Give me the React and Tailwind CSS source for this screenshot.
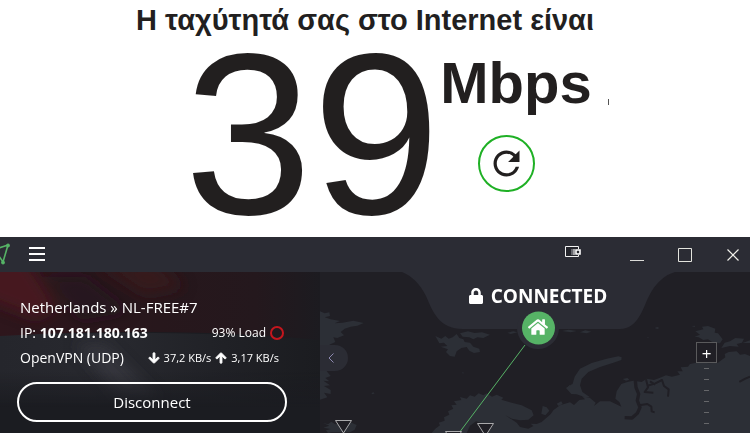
import {FaArrowDown, FaArrowUp, FaHome, FaLock} from 'react-icons/fa';
import {MdRefresh} from 'react-icons/md';

const zoomSteps = [1, 2, 3, 4, 5, 6];

function SpeedResult() {
  return (
    <section className="h-[237px] bg-white font-['Liberation_Sans',Arial,sans-serif] text-[#221f1f]">
      <h1 className="pr-5 text-center text-[29px] leading-10 font-bold whitespace-nowrap">
        Η ταχύτητά σας στο Internet είναι
      </h1>
      <div className="flex justify-center pt-[5px] pl-[43px]">
        <span className="text-[230px] leading-[180px]">39</span>
        <div className="pt-2">
          <div className="flex items-end">
            <span className="text-[58px] leading-[60px] font-bold">Mbps</span>
            <span className="mb-2 ml-4 h-1.5 w-px bg-[#555]" />
          </div>
          <button
            aria-label="Refresh"
            className="mt-[22px] ml-[38px] flex h-[57px] w-[57px] items-center justify-center rounded-full border-2 border-[#1fb025]"
          >
            <MdRefresh className="h-[39px] w-[39px]" />
          </button>
        </div>
      </div>
    </section>
  );
}

function TitleBar() {
  return (
    <header className="flex h-[35px] items-center bg-[#2b2c34] pr-[11px] text-white">
      <svg
        width="11"
        height="35"
        viewBox="0 0 11 35"
        fill="#56b366"
        stroke="#56b366"
      >
        <path d="M-4 12 8 8 3 25-4 15" fill="none" strokeWidth="1.6" />
        <circle cx="8" cy="8.500" r="1.500" />
        <circle cx="3" cy="25.500" r="1.500" />
      </svg>
      <button aria-label="Menu" className="ml-[18px]">
        <svg width="16" height="15" viewBox="0 0 16 15" fill="currentColor">
          <path d="M0 0h16v2H0zM0 6h16v2H0zM0 12h16v2H0z" />
        </svg>
      </button>
      <button aria-label="Compact view" className="mr-[49px] mb-1.5 ml-auto">
        <svg width="16" height="12" viewBox="0 0 16 12" fill="none">
          <path
            d="M13.500 3V.500H.500v10h13V9"
            stroke="#f2f2f2"
            fill="#24252b"
          />
          <path d="M6 3h2v6H6z" fill="#66676d" />
          <path d="M8 3h2v6H8z" fill="#a5a5a8" />
          <path d="M11 4h4v4h-4z" stroke="#fff" strokeWidth="1.600" />
        </svg>
      </button>
      <button aria-label="Minimize" className="mr-[34px]">
        <svg width="14" height="14" viewBox="0 0 14 14">
          <path d="M0 12.500h14" stroke="#dcdcd8" />
        </svg>
      </button>
      <button aria-label="Maximize" className="mr-[35px]">
        <svg width="14" height="14" viewBox="0 0 14 14">
          <path d="M.5.5h13v13H.5z" fill="none" stroke="#e4e4de" />
        </svg>
      </button>
      <button aria-label="Close">
        <svg width="12" height="12" viewBox="0 0 12 12">
          <path d="m.5.5 11 11m0-11-11 11" stroke="#f0f0ea" strokeWidth="1.2" />
        </svg>
      </button>
    </header>
  );
}

function FlagBackdrop() {
  return (
    <svg
      className="absolute inset-0 h-full w-full"
      viewBox="0 0 320 161"
      preserveAspectRatio="none"
    >
      <defs>
        <linearGradient id="red" x1="0" y1="0" x2="1" y2="0">
          <stop offset="0" stopColor="#2e161c" />
          <stop offset="0.5" stopColor="#27171c" />
          <stop offset="0.8" stopColor="#24181d" />
          <stop offset="1" stopColor="#1c1b20" />
        </linearGradient>
        <linearGradient id="pale" x1="0" y1="0" x2="1" y2="0">
          <stop offset="0" stopColor="#25262c" />
          <stop offset="0.35" stopColor="#28292f" />
          <stop offset="0.7" stopColor="#202126" />
          <stop offset="1" stopColor="#1b1c20" />
        </linearGradient>
        <linearGradient id="fade" x1="0" y1="0" x2="0" y2="1">
          <stop offset="0" stopColor="#1b1c21" stopOpacity="0" />
          <stop offset="1" stopColor="#1b1c21" />
        </linearGradient>
        <filter id="soft" x="-20%" y="-50%" width="140%" height="200%">
          <feGaussianBlur stdDeviation="7" />
        </filter>
      </defs>
      <path d="M0 0h320v161H0z" fill="#1b1c21" />
      <path d="M0 60C70 64 160 56 320 68v65H0z" fill="url(#pale)" />
      <path d="M0 0h320v68C220 58 110 58 0 64z" fill="url(#red)" />
      <g filter="url(#soft)">
        <path d="M-15-15h40l32 50-20 12-52-20z" fill="#4d1822" opacity="0.8" />
        <path d="M95-10h60l30 25-40 8z" fill="#3d1820" opacity="0.7" />
        <path d="M45 5h40l45 35-50 8z" fill="#1e191d" opacity="0.5" />
        <path d="M75 72h30l55 55h-40z" fill="#3a3b43" opacity="0.6" />
      </g>
      <path d="M0 100h320v35H0z" fill="url(#fade)" />
      <path d="M0 135h320v26H0z" fill="#1b1c21" />
    </svg>
  );
}

function ConnectionPanel() {
  return (
    <section className="relative w-[320px] shrink-0 overflow-hidden">
      <FlagBackdrop />
      <div className="relative pt-[23px] pr-[33px] pl-[17px]">
        <h2 className="pl-[3px] text-[15px] leading-[25px]">
          Netherlands » NL-FREE#7
        </h2>
        <div className="flex items-center pl-[3px] text-[14px] leading-[25px]">
          <span>
            IP: <b>107.181.180.163</b>
          </span>
          <span className="ml-auto text-xs">93% Load</span>
          <span className="mr-[3px] ml-1 h-3.5 w-3.5 rounded-full border-2 border-[#c5161d]" />
        </div>
        <div className="flex items-center pl-[3px] text-[14px] leading-[25px]">
          <span>OpenVPN (UDP)</span>
          <span className="mr-2 ml-auto flex items-center gap-1 text-[11px]">
            <FaArrowDown className="h-3 w-3" strokeWidth="40" />
            37,2 KB/s
            <FaArrowUp className="h-3 w-3" strokeWidth="40" />
            3,17 KB/s
          </span>
        </div>
        <button className="mt-3 h-10 w-full rounded-full border-2 border-white text-[15px]">
          Disconnect
        </button>
      </div>
    </section>
  );
}

function WorldMap() {
  return (
    <svg
      className="absolute inset-0 h-full w-full"
      viewBox="0 0 430 161"
      preserveAspectRatio="xMidYMid slice"
    >
      <path d="M0 0h430v161H0z" fill="#201f25" />
      <g fill="#2c2f36" transform="translate(0 -40) scale(.33333)">
        {/* Greenland and Iceland */}
        <path d="M0 238 14 244 28 241 30 252 14 256 32 262 60 267 44 274 68 272 100 266 131 273 112 281 92 284 74 290 62 300 72 310 52 318 40 316 46 330 28 338 52 350 30 350 40 366 42 398 26 402 28 416 20 418 32 432 16 438 28 448 10 446 30 460 12 462 32 474 32 486 12 482 22 496 0 503z" />
        <path d="m8 572 16 5 10-8 12 8 40-9 12 6 12 5-6 14-14 8H34l-10 2-6-8 14-4-22-4 18-6z" />
        {/* Svalbard */}
        <path d="M346 312 364 320 376 312 386 320 398 316 410 306 418 318 430 322 434 330 450 332 460 344 478 350 480 360 462 363 448 356 440 345 424 348 410 358 404 374 390 372 378 360 384 352 362 344 382 342 372 332 358 334z" />
        <path d="m420 304 24-6 20 5 22-2 24 7-20 10-18-2-12 6-12-6-20-2z" />
        <path d="m562 302 18-4 12 3-20 5zM154 484l6-3 4 3-6 3zM426 421l6 1-3 3z" />
        {/* Scandinavia */}
        <path d="M335 603 346 590 360 580 356 572 374 566 372 556 388 548 384 538 400 530 394 520 410 518 402 508 424 504 420 495 440 500 450 490 464 494 476 484 490 490 500 484 516 494 530 488 550 497 544 503 575 512 605 520 635 535 641 550 625 563 600 565 576 560 556 550 590 572 600 585 625 590 640 582 632 575 650 576 665 570 690 548 730 530 780 514V603z" />
        <path d="m440 603 10-22 18-13 18 6 8 29z" fill="#201f25" />
        <path d="M664 545 668 522 680 526 688 536 676 550zM710 515 724 508 728 516 716 522zM740 468l10-10v14z" />
      </g>
      <g fill="#2c2f36" transform="translate(230 -40) scale(.33333)">
        {/* northern Russia */}
        <path d="M0 550 10 535 30 520 60 511 72 519 88 504 105 502 96 492 120 498 137 512 132 522 150 508 180 508 214 524 208 510 196 500 200 478 214 456 232 450 250 446 275 450 290 440 312 444 334 436 348 430 366 434 390 428 382 418 398 418 392 406 414 404 420 396 450 390 476 394 504 392 526 376 524 366 536 360 560 358 570 368 585 366 600 372V603H0z" />
        {/* Novaya Zemlya */}
        <path d="M205 373 215 376 214 384 190 392 150 405 115 420 95 440 90 460 97 480 120 496 105 496 80 487 64 486 48 468 68 455 74 434 90 410 125 393 170 380z" />
        <path d="M436 298 460 292 456 284 474 282 496 290 494 302 504 304 518 322 510 334 490 332 474 322 460 324 446 316 434 314 450 308z" />
        <path d="M514 348 524 332 540 328 556 318 582 320 576 332 560 336 566 344 540 342z" />
        <path d="M578 333l22-8v8zM424 282l12-1-2 4zM314 288l8-3 6 3-6 3zM290 316l8 1-4 2zM36 297l20-4 24 4-18 4zM90 301l16-6 18 4-14 5zM218 441l14-3 6 5-10 3z" />
        <g fill="none" stroke="#201f25" strokeLinejoin="round">
          <path
            d="m256 446 2 20 8 20-4 20 8 20-8 18-16 14-22-1"
            strokeWidth="10"
          />
          <path
            d="m268 520 24-4 12 8 1 14 9 3M288 442l6 24-10 14 26 2M290 462l26-8 20-10 6 18 14 10-2 22M300 448l16 10M600 434l-14 6-18 10"
            strokeWidth="6"
          />
        </g>
      </g>
      <path
        d="M82 0C92 4 100 12 106 24C113 40 119 57 143 57H300C318 57 323 36 329 24C335 12 344 3 355 0Z"
        fill="#2b2c34"
      />
      <path d="m205 73-66 88" stroke="#56b366" />
      <circle cx="218" cy="56" r="21" fill="#2b2c34" />
      <circle cx="218.500" cy="56" r="16.500" fill="#56b366" />
      <g fill="#201f25" stroke="#a9a9ab">
        <path d="M15.500 148.500h16l-8 12.500zM157.500 151.500h16l-8 12.500zM125.500 159.500h16l-8 12.500z" />
      </g>
    </svg>
  );
}

function MapPanel() {
  return (
    <section className="relative min-w-0 flex-1 overflow-hidden">
      <WorldMap />
      <div className="relative flex flex-col items-center pt-3 pl-[6px]">
        <div className="flex items-center gap-2 text-[19px] leading-6 font-bold">
          <FaLock className="h-4 w-3.5" />
          CONNECTED
        </div>
        <FaHome className="mt-[9px] h-5 w-5" />
      </div>
      <button
        aria-label="Collapse map"
        className="absolute top-[73px] left-0 flex h-[26px] w-7 items-center rounded-r-full bg-[#2b2c34] pl-2"
      >
        <svg width="6" height="10" viewBox="0 0 6 10">
          <path d="M5.500.5 1 5l4.500 4.500" fill="none" stroke="#8d89b0" />
        </svg>
      </button>
      <div className="absolute top-[70px] right-[33px] flex flex-col items-center">
        <button
          aria-label="Zoom in"
          className="flex h-[21px] w-[21px] items-center justify-center border border-[#5a5a5c] bg-[#201f25] pt-0.5 text-[17px] leading-5"
        >
          +
        </button>
        <div className="mt-[5px] flex flex-col gap-2.5">
          {zoomSteps.map(x => (
            <span key={x} className="h-px w-[5px] bg-[#66676a]" />
          ))}
        </div>
      </div>
    </section>
  );
}

export default function App() {
  return (
    <main className="overflow-hidden">
      <SpeedResult />
      <div className="font-['Open_Sans','Noto_Sans',sans-serif]">
        <TitleBar />
        <div className="flex h-[161px] text-white">
          <ConnectionPanel />
          <MapPanel />
        </div>
      </div>
    </main>
  );
}
